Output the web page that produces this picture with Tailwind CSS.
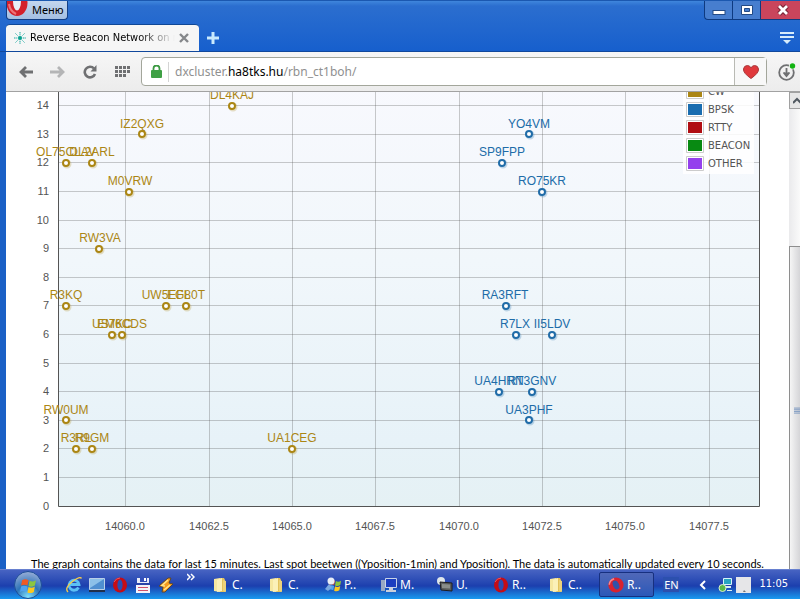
<!DOCTYPE html>
<html lang="en">
<head>
<meta charset="utf-8">
<meta name="viewport" content="width=device-width, initial-scale=1">
<title>Reverse Beacon Network on map</title>
<script src="https://cdn.jsdelivr.net/npm/@tailwindcss/browser@4"></script>
</head>
<body class="flex h-screen flex-col overflow-hidden bg-white font-['Noto_Sans','DejaVu_Sans_Condensed',sans-serif] text-xs text-black">

<svg class="hidden" aria-hidden="true">
  <defs>
    <symbol id="folder" viewBox="0 0 16 16">
      <path d="M1 2l6-1v14l-6-1z" fill="#f6e7a0"/><path d="M7 1h4l1 2v12H7z" fill="#e3c25c"/><path d="M4 3l5-2v13l-5 1z" fill="#fbf0b8"/><path d="M10 3l3 1v11l-3-1z" fill="#ecd27a"/>
    </symbol>
    <symbol id="opera" viewBox="0 0 16 16">
      <ellipse cx="8" cy="8" rx="7" ry="7.5" fill="#c60c16"/><ellipse cx="8" cy="8" rx="2.6" ry="5.4" fill="#2a4db4"/><path d="M2 5Q4 1 8 1" stroke="#f0555a" fill="none"/>
    </symbol>
    <symbol id="opera-tilt" viewBox="0 0 16 16">
      <g transform="rotate(-25 8 8)"><ellipse cx="8" cy="8" rx="7.6" ry="7.4" fill="#d8222f"/><ellipse cx="8" cy="8" rx="3" ry="4.6" fill="#3152a8"/><path d="M2 5Q4 1 9 1.500" stroke="#f8878a" stroke-width="1.500" fill="none"/></g>
    </symbol>
    <symbol id="flag" viewBox="0 0 16 16">
      <path d="M2 3q3-2 6 0L7 8Q4 6.500 1 8z" fill="#ef5a24"/><path d="M9 3.500q3 1.500 6-.5l-1 5q-3 2-6 .5z" fill="#8cc63f"/><path d="M1 9q3-1.500 6 0l-1 5q-3-1.500-6 0z" fill="#4fa3ef"/><path d="M8 9.500q3 1.500 6-.5l-1 5q-3 2-6 .5z" fill="#fdc81e"/>
    </symbol>
  </defs>
</svg>

<div class="flex min-h-0 flex-1 flex-col border-l-[6px] border-[#1a60c6] bg-white">

  <header class="-ml-[6px] flex h-[52px] shrink-0 justify-between border-t border-b border-t-[#1b58b0] border-b-[#11489c] bg-linear-to-b from-[#3f86dc] via-[#2b6ecf] via-10% to-[#165fcd] pl-[6px]">
    <div class="flex flex-col">
      <button class="flex h-[19px] w-[62px] items-center gap-1 overflow-hidden rounded-b border border-t-0 border-[#123f86] bg-linear-to-b from-[#c3d6ee] to-[#a4bfe2] text-[11px]">
        <svg class="-mt-1 h-[20px] w-[21px] shrink-0" viewBox="0 0 21 20"><ellipse cx="10" cy="5" rx="10.500" ry="13" fill="#d3202c"/><ellipse cx="10" cy="3" rx="4" ry="9.500" fill="#e8eef8"/><path d="M2 6Q3 13 9 16" stroke="#ee7378" stroke-width="2" fill="none"/></svg>
        Меню
      </button>
      <div class="mt-1 flex flex-1 items-center">
        <div class="flex h-full w-[193px] items-center rounded-t-[4px] border-t border-[#0f4796] bg-[#f6f6f6] px-2">
          <svg class="mr-1 h-3 w-3 shrink-0" viewBox="0 0 12 12" stroke="#17a9a0" stroke-width="1"><path d="M6 0v3M6 9v3M0 6h3M9 6h3M1.500 1.500l2 2M8.500 8.500l2 2M10.500 1.500l-2 2M3.500 8.500l-2 2" stroke-dasharray="1.500 .7"/><circle cx="6" cy="6" r="1.800" fill="#0ea085"/></svg>
          <a href="#" class="min-w-0 flex-1 overflow-hidden bg-linear-to-r from-black from-75% to-transparent bg-clip-text font-['DejaVu_Sans_Condensed',sans-serif] text-[11px] whitespace-nowrap text-transparent">Reverse Beacon Network on map</a>
          <button class="mr-[2px] ml-1 h-[10px] w-[10px]" aria-label="Close tab"><svg viewBox="0 0 10 10"><path d="M1 1l8 8M9 1l-8 8" stroke="#85878a" stroke-width="2.400"/></svg></button>
        </div>
        <button class="ml-2 h-3 w-3" aria-label="New tab"><svg viewBox="0 0 12 12"><path d="M6 0v12M0 6h12" stroke="#c9eafd" stroke-width="3"/></svg></button>
      </div>
    </div>
    <div class="flex flex-col items-end justify-between">
      <div class="flex h-[19px] overflow-hidden rounded-bl border-b border-l border-[#0e3a80] bg-[#477ecf]">
        <button class="flex w-[27px] items-center justify-center" aria-label="Minimize"><svg class="h-4 w-4" viewBox="0 0 16 16"><rect x="2" y="8.500" width="12" height="4" fill="#fff" stroke="#234a85"/></svg></button>
        <button class="flex w-7 items-center justify-center border-l border-[#0e3a80]" aria-label="Maximize"><svg class="h-4 w-4" viewBox="0 0 16 16"><path d="M2.500 3.500h11v9h-11z" fill="#fff" stroke="#234a85"/><path d="M5.500 6.500h5v3h-5z" fill="#477ecf" stroke="#234a85"/></svg></button>
        <button class="flex w-10 items-center justify-center border-l border-[#0e3a80] bg-[#c9455c] pl-1" aria-label="Close"><svg class="h-4 w-4" viewBox="0 0 16 16"><path d="M4 4l8 8M12 4l-8 8" stroke="#7b2435" stroke-width="5"/><path d="M4 4l8 8M12 4l-8 8" stroke="#fff" stroke-width="2.800"/></svg></button>
      </div>
      <button class="mr-[6px] mb-[7px] h-3 w-[14px]" aria-label="Tab menu"><svg viewBox="0 0 14 12" fill="#d6ecfb"><path d="M0 0h14v2H0zM0 4h14v2H0zM3 8h8l-4 4z"/></svg></button>
    </div>
  </header>

  <nav class="flex h-10 shrink-0 items-center border-b border-[#a2a2a2] bg-linear-to-b from-[#f6f6f6] to-[#ececec] pl-[13px]">
    <button class="mr-4 h-[14px] w-[15px]" aria-label="Back"><svg viewBox="0 0 15 14"><path d="M14 7H2M7 2L2 7l5 5" fill="none" stroke="#6f7072" stroke-width="2.800"/></svg></button>
    <button class="mr-[18px] h-[14px] w-[15px]" aria-label="Forward"><svg viewBox="0 0 15 14"><path d="M0 7h13M8 2l5 5-5 5" fill="none" stroke="#b4b5b6" stroke-width="2.800"/></svg></button>
    <button class="mr-[18px] h-[14px] w-[14px]" aria-label="Reload"><svg viewBox="0 0 14 14"><path d="M11 3.500A5.300 5.300 0 1 0 12 9" fill="none" stroke="#6f7072" stroke-width="2.600"/><path d="M13.500 0v6.500H7.500z" fill="#6f7072"/></svg></button>
    <button class="mr-[11px] h-3 w-[15px]" aria-label="Speed dial"><svg viewBox="0 0 15 12" fill="#6f7072"><path d="M0 0h3v3H0zM4 0h3v3H4zM8 0h3v3H8zM12 0h3v3h-3zM0 4h3v3H0zM4 4h3v3H4zM8 4h3v3H8zM12 4h3v3h-3zM0 8h3v3H0zM4 8h3v3H4zM8 8h3v3H8z"/></svg></button>
    <div class="flex h-[29px] flex-1 items-center rounded-[4px] border border-[#a3a69b] bg-white">
      <svg class="ml-[9px] h-[13px] w-[11px]" viewBox="0 0 11 13"><path d="M2.500 6V3.500a3 3 0 0 1 6 0V6" fill="none" stroke="#3c9a42" stroke-width="1.800"/><rect x="0" y="5" width="11" height="8" rx="1" fill="#3fa045"/></svg>
      <span class="mx-[6px] h-5 w-px bg-[#d4d4d4]"></span>
      <a href="#" class="flex-1 text-[12px] text-[#909090]">dxcluster.<span class="text-black">ha8tks.hu</span>/rbn_ct1boh/</a>
      <button class="flex h-full w-8 items-center justify-center border-l border-[#b9bab4] bg-[#f8f8f8]" aria-label="Bookmark"><svg class="h-[14px] w-4" viewBox="0 0 16 14"><path d="M8 13.500Q0 8 .5 4 1 .5 4.500.5 7 .5 8 3 9 .5 11.500.5 15 .5 15.500 4 16 8 8 13.500z" fill="#e0393c" stroke="#a8383a"/></svg></button>
    </div>
    <button class="mr-1 ml-[11px] h-[18px] w-[18px]" aria-label="Downloads"><svg viewBox="0 0 18 18"><circle cx="8.500" cy="9.500" r="7.300" fill="none" stroke="#6f7072" stroke-width="1.800"/><path d="M8.500 5v7M5.500 9.500l3 3.500 3-3.500" fill="#6f7072" stroke="#6f7072" stroke-width="1.800"/><circle cx="14.500" cy="3" r="3.600" fill="#f1f1f1"/><circle cx="14.500" cy="3" r="2.700" fill="#12b312"/></svg></button>
  </nav>

  <div class="flex min-h-0 flex-1">
    <main class="min-w-0 flex-1 overflow-hidden">
      <svg class="block h-auto w-full" viewBox="6 92 783 464" role="img" aria-label="Spots by frequency and minute" font-family="'Liberation Sans', Arial, sans-serif" font-size="12">
        <defs>
          <linearGradient id="plot" x1="0" y1="0" x2="0" y2="1"><stop offset="0" stop-color="#f9f9fe"/><stop offset=".45" stop-color="#f1f7fb"/><stop offset=".85" stop-color="#e7f2f8"/><stop offset="1" stop-color="#e5f1f4"/></linearGradient>
          <g id="dot"><circle cx="1" cy="1" r="3.500" fill="none" stroke-opacity=".25" stroke-width="2"/><circle cx="0" cy="0" r="3" fill="#fff" stroke-width="2"/></g>
        </defs>
        <rect x="58" y="60" width="702" height="447" fill="url(#plot)"/>
        <path d="M58 105.500h701M58 134.500h701M58 162.500h701M58 191.500h701M58 220.500h701M58 248.500h701M58 277.500h701M58 305.500h701M58 334.500h701M58 363.500h701M58 391.500h701M58 420.500h701M58 448.500h701M58 477.500h701M125.500 80v426M209.500 80v426M292.500 80v426M375.500 80v426M459.500 80v426M542.500 80v426M625.500 80v426M709.500 80v426" fill="none" stroke="#545454" stroke-opacity=".3"/>
        <path d="M58.500 80v426.500h701V80" fill="none" stroke="#545454"/>
        <g fill="#545454" font-size="11" text-anchor="end">
          <text x="49" y="109">14</text><text x="49" y="138">13</text><text x="49" y="166">12</text><text x="49" y="195">11</text><text x="49" y="224">10</text><text x="49" y="252">9</text><text x="49" y="281">8</text><text x="49" y="309">7</text><text x="49" y="338">6</text><text x="49" y="367">5</text><text x="49" y="395">4</text><text x="49" y="424">3</text><text x="49" y="452">2</text><text x="49" y="481">1</text><text x="49" y="510">0</text>
        </g>
        <g fill="#545454" font-size="11" text-anchor="middle">
          <text x="125" y="530">14060.0</text><text x="209" y="530">14062.5</text><text x="292" y="530">14065.0</text><text x="375" y="530">14067.5</text><text x="459" y="530">14070.0</text><text x="542" y="530">14072.5</text><text x="625" y="530">14075.0</text><text x="709" y="530">14077.5</text>
        </g>
        <g stroke="#ab8614">
          <use href="#dot" x="232" y="106"/><use href="#dot" x="142" y="134"/><use href="#dot" x="66" y="163"/><use href="#dot" x="92" y="163"/><use href="#dot" x="129" y="192"/><use href="#dot" x="99" y="249"/><use href="#dot" x="66" y="306"/><use href="#dot" x="166" y="306"/><use href="#dot" x="186" y="306"/><use href="#dot" x="112" y="335"/><use href="#dot" x="122" y="335"/><use href="#dot" x="66" y="420"/><use href="#dot" x="76" y="449"/><use href="#dot" x="92" y="449"/><use href="#dot" x="292" y="449"/>
        </g>
        <g fill="#ab8614" text-anchor="middle">
          <text x="232" y="99">DL4KAJ</text><text x="142" y="128">IZ2QXG</text><text x="66" y="156">OL75CLAV</text><text x="92" y="156">DL2ARL</text><text x="130" y="185">M0VRW</text><text x="100" y="242">RW3VA</text><text x="66" y="299">R3KQ</text><text x="166" y="299">UW5EFL</text><text x="186" y="299">EG80T</text><text x="112" y="328">US7KC</text><text x="122" y="328">EM6CDS</text><text x="66" y="414">RW0UM</text><text x="76" y="442">R3RL</text><text x="92" y="442">R9GM</text><text x="292" y="442">UA1CEG</text>
        </g>
        <g stroke="#206ca8">
          <use href="#dot" x="529" y="134"/><use href="#dot" x="502" y="163"/><use href="#dot" x="542" y="192"/><use href="#dot" x="506" y="306"/><use href="#dot" x="516" y="335"/><use href="#dot" x="552" y="335"/><use href="#dot" x="499" y="392"/><use href="#dot" x="532" y="392"/><use href="#dot" x="529" y="420"/>
        </g>
        <g fill="#206ca8" text-anchor="middle">
          <text x="529" y="128">YO4VM</text><text x="502" y="156">SP9FPP</text><text x="542" y="185">RO75KR</text><text x="505" y="299">RA3RFT</text><text x="515" y="328">R7LX</text><text x="552" y="328">II5LDV</text><text x="499" y="385">UA4HRN</text><text x="532" y="385">RT3GNV</text><text x="529" y="414">UA3PHF</text>
        </g>
        <rect x="683" y="80" width="71" height="94" fill="#fff" fill-opacity=".85"/>
        <g stroke="#ccc" fill="#fff"><path d="M686.500 84.500h17v14h-17zM686.500 102.500h17v14h-17zM686.500 120.500h17v14h-17zM686.500 138.500h17v14h-17zM686.500 156.500h17v14h-17z"/></g>
        <rect x="688" y="86" width="14" height="11" fill="#ab8614"/><rect x="688" y="104" width="14" height="11" fill="#1a6db0"/><rect x="688" y="122" width="14" height="11" fill="#b00d12"/><rect x="688" y="140" width="14" height="11" fill="#088a12"/><rect x="688" y="158" width="14" height="11" fill="#9440ed"/>
        <g fill="#545454" font-family="'DejaVu Sans', Verdana, sans-serif" font-size="10">
          <text x="708" y="95">CW</text><text x="708" y="113">BPSK</text><text x="708" y="131">RTTY</text><text x="708" y="149">BEACON</text><text x="708" y="167">OTHER</text>
        </g>
      </svg>
      <p class="text-center font-[Lato,Arial,sans-serif] text-[11px] leading-4 whitespace-nowrap">The graph contains the data for last 15 minutes. Last spot beetwen ((Yposition-1min) and Yposition). The data is automatically updated every 10 seconds.</p>
    </main>
    <div class="flex w-[11px] shrink-0 flex-col overflow-hidden bg-linear-to-r from-[#eaeaec] to-[#fafafa]" aria-hidden="true">
      <div class="flex h-[17px] w-4 items-center justify-center border border-[#a0a0a0] bg-[#e6e6e6]"><svg class="h-2 w-2" viewBox="0 0 8 8"><path d="M0 6l4-4 4 4" fill="none" stroke="#505860" stroke-width="2"/></svg></div>
      <div class="mt-[137px] flex w-4 flex-1 items-center border border-b-0 border-[#8e8e8e] bg-linear-to-r from-[#f5f5f5] to-[#c8c8cc] pt-[6px] pl-1"><svg class="h-2 w-3" viewBox="0 0 12 8"><path d="M0 .5h12M0 2.500h12M0 4.500h12M0 6.500h12" stroke="#6e8ebc"/></svg></div>
    </div>
  </div>
</div>

<footer class="flex h-[30px] shrink-0 items-center border-t border-[#6780cf] bg-linear-to-b from-[#4763c2] via-[#1c3fae] via-55% to-[#199af0] pl-[14px] text-[12px] text-white">
  <button class="mr-6 h-7 w-7" aria-label="Start"><svg viewBox="0 0 28 28"><defs><radialGradient id="orb" cx=".5" cy=".95" r=".9"><stop offset="0" stop-color="#7fe3ff"/><stop offset=".5" stop-color="#2d74b8"/><stop offset="1" stop-color="#8fa8d4"/></radialGradient></defs><circle cx="14" cy="14" r="13.500" fill="url(#orb)" stroke="#1d4d96"/><use href="#flag" x="6" y="6" width="17" height="17"/></svg></button>
  <div class="flex items-center gap-[7px]">
    <button class="h-4 w-4" aria-label="Internet Explorer"><svg viewBox="0 0 16 16"><path d="M12.500 10.500A5 5 0 1 1 13 7.500H4" fill="none" stroke="#5cc0f5" stroke-width="2.800"/><path d="M2 15Q-2 11 7 4 14-1 15.500 1.500" fill="none" stroke="#f5cc4a" stroke-width="1.400"/></svg></button>
    <button class="h-4 w-4" aria-label="Show desktop"><svg viewBox="0 0 16 16"><path d="M.5 1.500h15v11H.5z" fill="#4f8fd0" stroke="#b9cfe8"/><path d="M1 2h14L1 11z" fill="#8cc0e8"/><path d="M0 13h16v2H0z" fill="#20304c"/></svg></button>
    <button class="h-4 w-4" aria-label="Opera"><svg viewBox="0 0 16 16"><use href="#opera" width="16" height="16"/></svg></button>
    <button class="h-4 w-4" aria-label="Save"><svg viewBox="0 0 16 16"><path d="M2 1h12v5H2z" fill="#e8ecf8"/><path d="M5 0h7v5H5z" fill="#3450b8"/><path d="M9 1h2v3H9z" fill="#fff"/><path d="M1 6h14v10H1z" fill="#f3f3f8"/><path d="M1 6h14v2H1z" fill="#2a44a8"/><path d="M3 10h10v1H3zM3 13h10v1H3z" fill="#d0506a"/></svg></button>
    <button class="h-4 w-4" aria-label="Winamp"><svg viewBox="0 0 16 16"><path d="M10 1L1 9l4 1-1 5h3l8-8-4-1 2-5z" fill="#f39a1e" stroke="#5a4630"/><path d="M10 3L4 8.500l3 .5M12 8l-6 5" fill="none" stroke="#ffe48a" stroke-width="1.600"/></svg></button>
    <button class="-mt-4 ml-[6px] h-2 w-2" aria-label="More"><svg viewBox="0 0 8 8"><path d="M0 1l3 3-3 3M4 1l3 3-3 3" fill="none" stroke="#fff" stroke-width="1.500"/></svg></button>
  </div>
  <div class="ml-[18px] flex">
    <button class="flex w-14 items-center gap-[3px]"><svg class="h-4 w-4"><use href="#folder"/></svg>C.</button>
    <button class="flex w-14 items-center gap-[3px]"><svg class="h-4 w-4"><use href="#folder"/></svg>C.</button>
    <button class="flex w-14 items-center gap-[3px]"><svg class="h-4 w-4" viewBox="0 0 16 16"><use href="#flag" x="3" y="1" width="14" height="14"/><circle cx="6" cy="4" r="3.500" fill="#e8edf6"/><path d="M0 12l4-5 3 3-4 4z" fill="#7aa8e0"/></svg>P..</button>
    <button class="flex w-14 items-center gap-[3px]"><svg class="h-4 w-4" viewBox="0 0 16 16"><path d="M0 3h4v11H0z" fill="#98a8c4"/><path d="M4.500 1.500h11v9h-11z" fill="#1b3ec0" stroke="#c9d4e8"/><path d="M8 11h4v2h3v2H5v-2h3z" fill="#c9d0dc"/></svg>M.</button>
    <button class="flex w-14 items-center gap-[3px]"><svg class="h-4 w-4" viewBox="0 0 16 16"><circle cx="4" cy="4" r="4" fill="#dfe6ea"/><path d="M3 5l12 1v8L4 13z" fill="#5b5e5c" stroke="#1c1c20"/><path d="M5 7l8 .5v4L5 11z" fill="#8a8e8a"/></svg>U.</button>
    <button class="flex w-14 items-center gap-[3px]"><svg class="h-4 w-4"><use href="#opera"/></svg>R..</button>
    <button class="flex w-[50px] items-center gap-[3px]"><svg class="h-4 w-4"><use href="#folder"/></svg>C..</button>
    <button class="flex h-[25px] w-[55px] items-center gap-[3px] rounded-[2px] border border-[#17307f] bg-linear-to-b from-[#5068b8] to-[#2a58b8] pl-2"><svg class="h-4 w-4"><use href="#opera-tilt"/></svg>R..</button>
  </div>
  <div class="ml-auto flex items-center pr-3">
    <button class="mr-5 h-[15px] w-4 bg-[#2c50ae]" aria-label="Input language"><span class="flex justify-center text-[11px] leading-[15px]">EN</span></button>
    <button class="mr-3 h-[10px] w-[7px]" aria-label="Show hidden icons"><svg viewBox="0 0 7 10"><path d="M6 1L2 5l4 4" fill="none" stroke="#fff" stroke-width="2"/></svg></button>
    <svg class="mr-1 h-[14px] w-[14px]" viewBox="0 0 14 14"><path d="M5.500.5h8v6h-8z" fill="#28a5c0" stroke="#d8f4f8"/><path d="M4 8h9v2H4zM9 12h5v1H9z" fill="#d8eef0"/><circle cx="4.500" cy="10" r="3.500" fill="#5ab848" stroke="#d8f0c8"/></svg>
    <svg class="mr-2 h-4 w-[15px]" viewBox="0 0 15 16"><path d="M0 0h15v16H0z" fill="#e6e6e8"/><path d="M7 15l1-2 2 2z" fill="#777"/></svg>
    <time class="font-['DejaVu_Sans_Condensed',sans-serif] text-[11px]">11:05</time>
  </div>
</footer>
</body>
</html>
